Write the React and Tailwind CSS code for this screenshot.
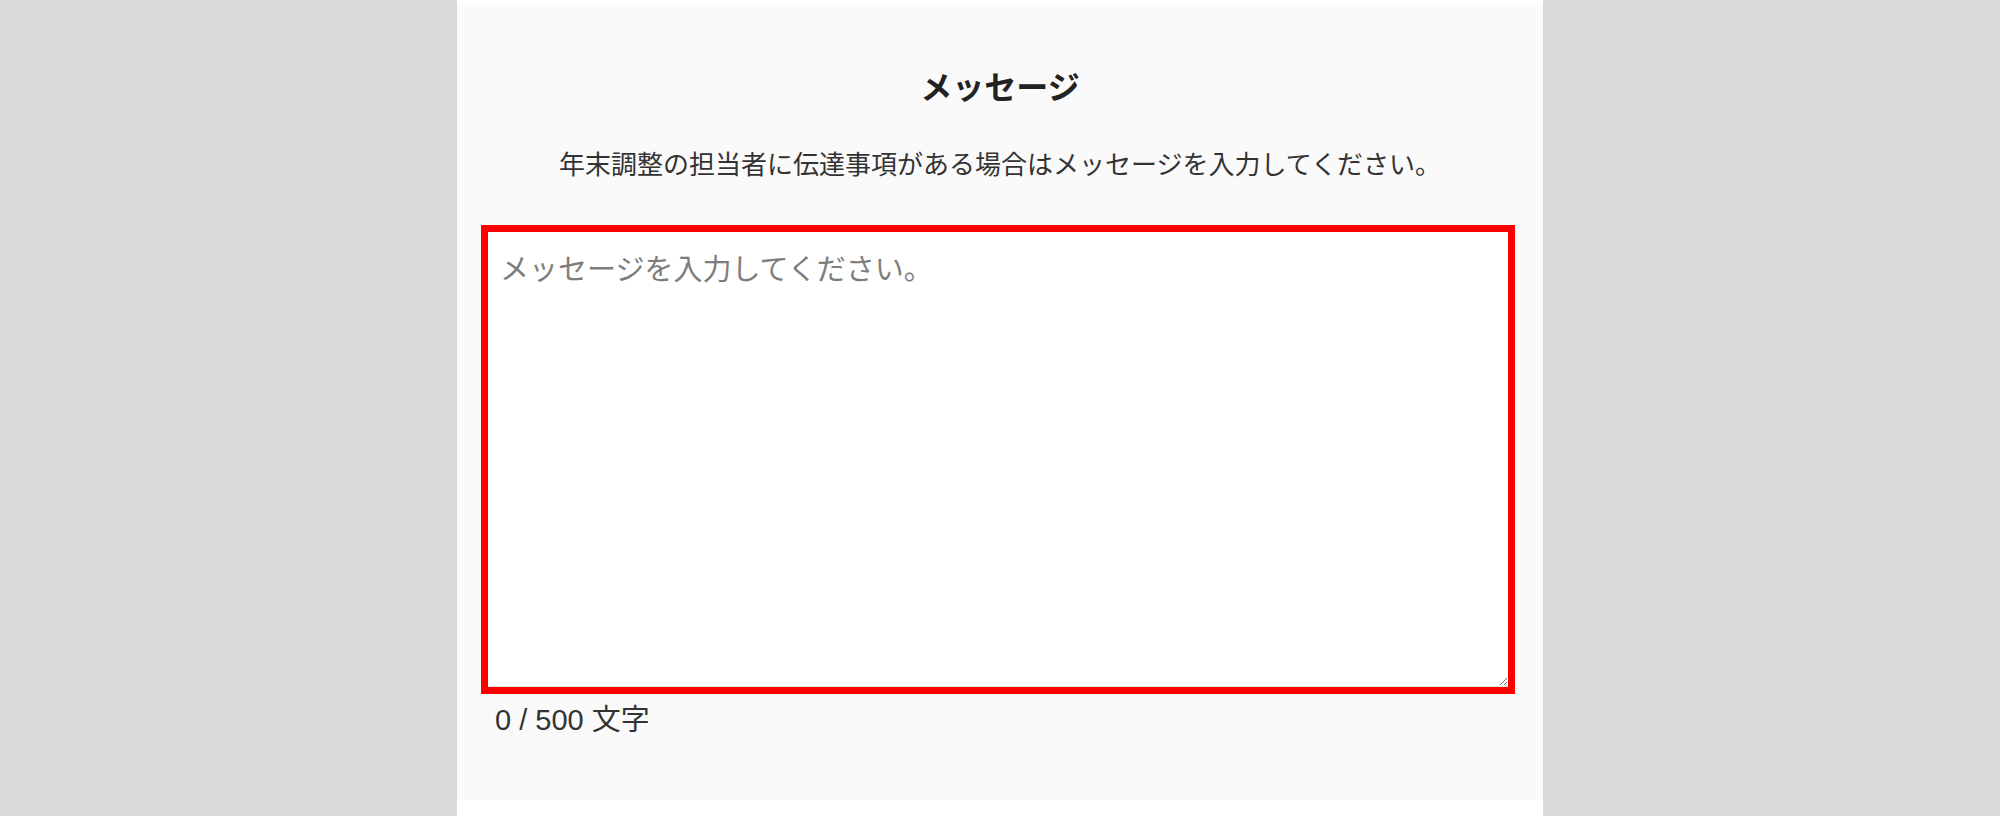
export default function App() {
  const font = { fontFamily: '"Noto Sans CJK JP", "Liberation Sans", sans-serif' };
  return (
    <div className="min-h-screen w-full bg-[#d9d9d9] flex justify-center" style={font}>
      <div className="w-[1086px] bg-white pt-[5px] min-h-[816px]">
        <div className="bg-[#fafafa] h-[795px] flex flex-col pt-[60px]">
          <h1 className="text-center text-[32px] leading-[40px] font-bold text-[#222]">
            メッセージ
          </h1>
          <p className="mt-[40px] text-center text-[26px] leading-[36px] text-[#333]">
            年末調整の担当者に伝達事項がある場合はメッセージを入力してください。
          </p>
          <div className="mt-[44px] ml-[24px] mr-[28px] h-[469px] border-[7px] border-[#ff0000] bg-white flex">
            <textarea
              className="flex-1 bg-white border-b border-[#e5e5e5] px-[12px] pt-[16px] text-[29px] leading-[38px] text-[#333] placeholder:text-[#7d7d7d] outline-none"
              style={font}
              placeholder="メッセージを入力してください。"
            />
          </div>
          <div className="mt-[10px] ml-[38px] text-[29px] leading-[32px] text-[#333]" style={{ fontFamily: '"Liberation Sans", "Noto Sans CJK JP", sans-serif' }}>
            0 / 500 文字
          </div>
        </div>
      </div>
    </div>
  );
}
